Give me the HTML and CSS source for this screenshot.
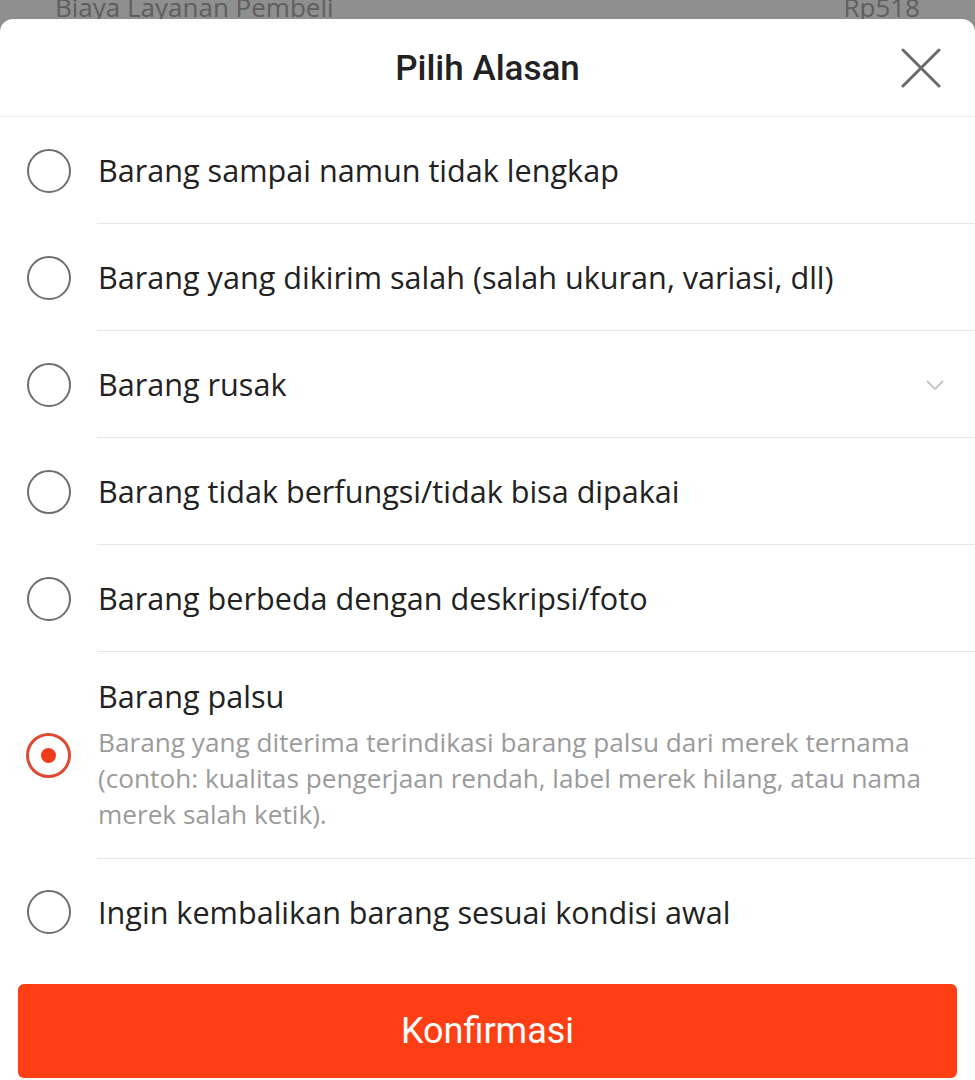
FILE: index.html
```html
<!DOCTYPE html>
<html lang="id">
<head>
<meta charset="utf-8">
<title>Pilih Alasan</title>
<link rel="stylesheet" href="styles.css">
</head>
<body>
<div class="backdrop">
  <span>Biaya Layanan Pembeli</span>
  <span>Rp518</span>
</div>
<div class="sheet">
  <div class="header">
    <h1 class="title">Pilih Alasan</h1>
    <button class="close" aria-label="Tutup">
      <svg width="40" height="40" viewBox="0 0 40 40"><path d="M2 2 L38 38 M38 2 L2 38" stroke="#6b6b6b" stroke-width="3" fill="none" stroke-linecap="round"/></svg>
    </button>
  </div>
  <ul class="list">
    <li class="row"><span class="radio-col"><span class="radio"></span></span><div class="label">Barang sampai namun tidak lengkap</div></li>
    <li class="row"><span class="radio-col"><span class="radio"></span></span><div class="label">Barang yang dikirim salah (salah ukuran, variasi, dll)</div></li>
    <li class="row"><span class="radio-col"><span class="radio"></span></span><div class="label with-chevron">Barang rusak
      <svg class="chevron" width="20" height="12" viewBox="0 0 20 12"><path d="M2 2 L10 10 L18 2" stroke="#c4c4c4" stroke-width="1.8" fill="none"/></svg></div></li>
    <li class="row"><span class="radio-col"><span class="radio"></span></span><div class="label">Barang tidak berfungsi/tidak bisa dipakai</div></li>
    <li class="row"><span class="radio-col"><span class="radio"></span></span><div class="label">Barang berbeda dengan deskripsi/foto</div></li>
    <li class="row"><span class="radio-col"><span class="radio checked"></span></span><div class="label tall">
      <div>Barang palsu</div>
      <div class="desc">Barang yang diterima terindikasi barang palsu dari merek ternama (contoh: kualitas pengerjaan rendah, label merek hilang, atau nama merek salah ketik).</div>
    </div></li>
    <li class="row last"><span class="radio-col"><span class="radio"></span></span><div class="label">Ingin kembalikan barang sesuai kondisi awal</div></li>
  </ul>
  <div class="footer">
    <button class="confirm">Konfirmasi</button>
  </div>
</div>
</body>
</html>
```
FILE: styles.css
```css
html, body {
  margin: 0;
  padding: 0;
  background: #8f8f8f;
  height: 1080px;
  overflow: hidden;
}
.backdrop {
  height: 19px;
  overflow: hidden;
  display: flex;
  justify-content: space-between;
  padding: 0 55px;
  font-family: "Open Sans", sans-serif;
  font-size: 26px;
  line-height: 26px;
  color: #5e5e5e;
}
.backdrop span {
  margin-top: -6px;
}
.sheet {
  background: #fff;
  border-radius: 13px 13px 0 0;
  height: 1061px;
  font-family: "Open Sans", sans-serif;
}
.header {
  height: 97px;
  border-bottom: 1px solid #f0f0f0;
  display: flex;
  align-items: center;
  justify-content: center;
  position: relative;
}
.title {
  margin: 0;
  padding-top: 2px;
  font-family: Roboto, sans-serif;
  font-weight: 500;
  font-size: 35px;
  color: #222;
}
.close {
  position: absolute;
  right: 34px;
  top: 29px;
  width: 40px;
  height: 40px;
  padding: 0;
  border: 0;
  background: none;
}
.list {
  list-style: none;
  margin: 0;
  padding: 0;
}
.row {
  display: flex;
}
.radio-col {
  width: 97px;
  flex: none;
  display: flex;
  align-items: center;
  justify-content: center;
}
.radio {
  width: 40px;
  height: 40px;
  border: 2px solid #6e6e6e;
  border-radius: 50%;
  box-sizing: content-box;
  display: flex;
  align-items: center;
  justify-content: center;
}
.radio.checked {
  border: 3px solid #dc4a34;
  width: 39px;
  height: 39px;
}
.radio.checked::after {
  content: "";
  width: 15px;
  height: 15px;
  border-radius: 50%;
  background: #f03a1a;
}
.label {
  flex: 1;
  min-height: 106px;
  border-bottom: 1px solid #e6e6e6;
  display: flex;
  align-items: center;
  font-size: 30.6px;
  color: #222;
  padding-left: 1px;
}
.with-chevron {
  justify-content: space-between;
  padding-right: 30px;
}
.chevron {
  margin-top: 2px;
}
.label.tall {
  flex-direction: column;
  align-items: flex-start;
  padding-top: 26px;
  padding-bottom: 26px;
  line-height: 36px;
}
.desc {
  margin-top: 10px;
  font-size: 26.2px;
  color: #9b9b9b;
  padding-right: 30px;
}
.row.last .label {
  border-bottom: 0;
}
.footer {
  padding: 19px 18px 0;
}
.confirm {
  display: block;
  width: 100%;
  height: 94px;
  border: 0;
  border-radius: 6px;
  background: #fe3f15;
  color: #fff;
  font-family: Roboto, sans-serif;
  font-size: 36px;
}
```
